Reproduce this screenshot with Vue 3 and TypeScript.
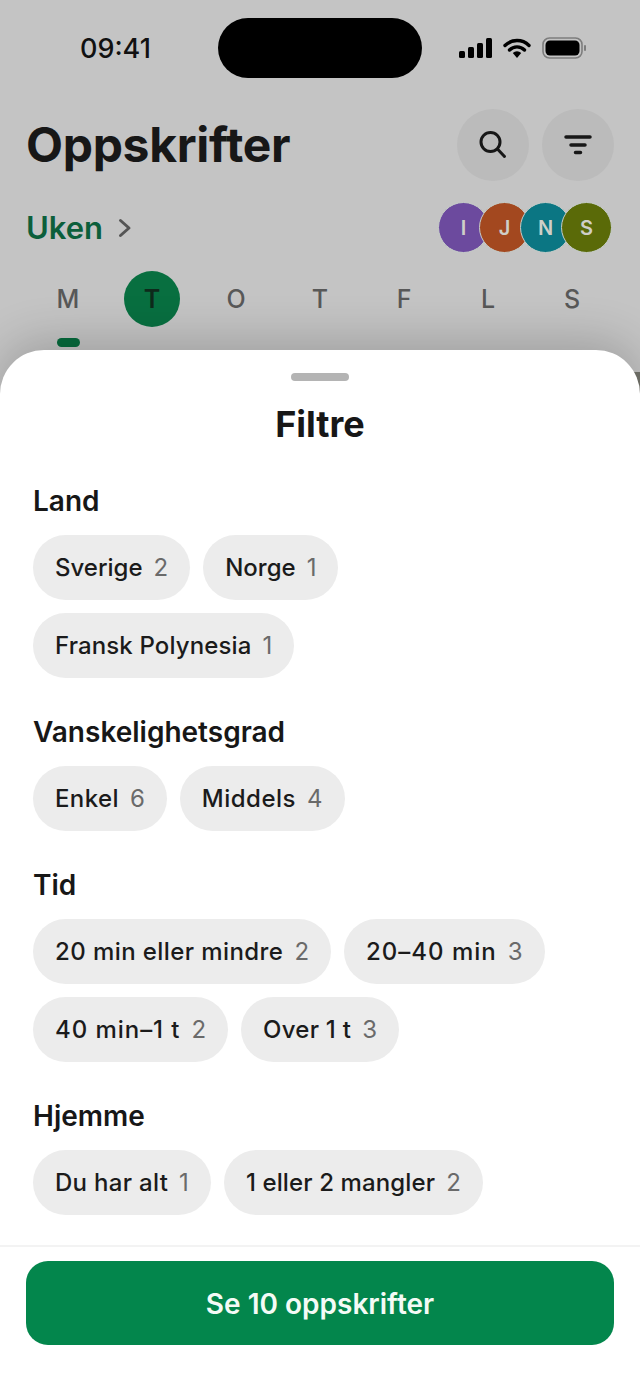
<script setup lang="ts">
interface Chip { label: string; count: number; spread?: number }
interface Group { title: string; chips: Chip[] }
const groups: Group[] = [
  { title: 'Land', chips: [{ label: 'Sverige', count: 2 }, { label: 'Norge', count: 1 }, { label: 'Fransk Polynesia', count: 1, spread: 0.13 }] },
  { title: 'Vanskelighetsgrad', chips: [{ label: 'Enkel', count: 6, spread: 0.4 }, { label: 'Middels', count: 4, spread: 0.5 }] },
  { title: 'Tid', chips: [{ label: '20 min eller mindre', count: 2, spread: 0.42 }, { label: '20–40 min', count: 3, spread: 1 }, { label: '40 min–1 t', count: 2, spread: 0.95 }, { label: 'Over 1 t', count: 3, spread: 0.25 }] },
  { title: 'Hjemme', chips: [{ label: 'Du har alt', count: 1, spread: 0.3 }, { label: '1 eller 2 mangler', count: 2, spread: 0.12 }] },
]
const days = ['M', 'T', 'O', 'T', 'F', 'L', 'S']
const people = [
  { l: 'I', c: '#6c4a9e' }, { l: 'J', c: '#a3481f' }, { l: 'N', c: '#0b7683' }, { l: 'S', c: '#5a6a08' },
]
</script>

<template>
  <div class="screen">
    <div class="status">
      <span class="time">09:41</span>
      <div class="island"></div>
      <div class="status-icons">
        <svg width="33" height="20" viewBox="0 0 33 20"><rect x="0" y="13" width="6" height="7" rx="1.5"/><rect x="9" y="9" width="6" height="11" rx="1.5"/><rect x="18" y="5" width="6" height="15" rx="1.5"/><rect x="27" y="0" width="6" height="20" rx="1.5"/></svg>
        <svg width="28" height="20" viewBox="0 0 28 20"><path d="M2 7.5a17 17 0 0 1 24 0M6.5 12a10.6 10.6 0 0 1 15 0" fill="none" stroke="#000" stroke-width="3.4" stroke-linecap="round"/><path d="M9.8 15a6 6 0 0 1 8.4 0L14 20z"/></svg>
        <svg width="45" height="22" viewBox="0 0 45 22"><rect x="1" y="1" width="39" height="20" rx="6.5" fill="none" stroke="#7d7d7d" stroke-width="1.6"/><rect x="3.5" y="3.5" width="34" height="15" rx="4.5"/><rect x="42" y="8" width="2" height="6" rx="1" fill="#7d7d7d"/></svg>
      </div>
    </div>

    <header class="head">
      <h1>Oppskrifter</h1>
      <div class="actions">
        <button class="round">
          <svg width="32" height="32" viewBox="0 0 32 32" fill="none" stroke="#171717" stroke-width="3" stroke-linecap="round"><circle cx="13.500" cy="13" r="9.500"/><path d="M20.500 20l7 7.500"/></svg>
        </button>
        <button class="round">
          <svg width="32" height="32" viewBox="0 0 32 32" fill="none" stroke="#171717" stroke-width="3.500" stroke-linecap="round"><path d="M4 8h24M9 16h14M13.500 23.500h5"/></svg>
        </button>
      </div>
    </header>

    <div class="week">
      <div class="week-link">
        <span>Uken</span>
        <svg width="14" height="20" viewBox="0 0 14 20" fill="none" stroke="#555" stroke-width="3" stroke-linecap="round" stroke-linejoin="round"><path d="M2.500 2.500L11 10l-8.500 7.500"/></svg>
      </div>
      <div class="people">
        <span v-for="p in people" :key="p.l" class="avatar" :style="{ background: p.c }">{{ p.l }}</span>
      </div>
    </div>

    <div class="days">
      <div v-for="(d, i) in days" :key="i" class="day" :class="{ active: i === 1 }">
        <span class="letter">{{ d }}</span>
        <span v-if="i === 0" class="marker"></span>
      </div>
    </div>

    <div class="peek"></div>

    <section class="sheet">
      <div class="handle"></div>
      <h2>Filtre</h2>
      <div class="groups">
        <div v-for="g in groups" :key="g.title" class="group">
          <h3>{{ g.title }}</h3>
          <div class="chips">
            <div v-for="c in g.chips" :key="c.label" class="chip">
              <span :style="{ letterSpacing: (c.spread ?? 0) + 'px' }">{{ c.label }}</span>
              <span class="count">{{ c.count }}</span>
            </div>
          </div>
        </div>
      </div>
      <footer class="foot">
        <button class="cta">Se 10 oppskrifter</button>
      </footer>
    </section>
  </div>
</template>

<style>
html, body { margin: 0; background: #c4c4c4; }
</style>

<style scoped>
* { box-sizing: border-box; }
.screen {
  position: relative;
  width: 640px;
  height: 1388px;
  overflow: hidden;
  background: #c4c4c4;
  font-family: Inter, "Liberation Sans", sans-serif;
  color: #171717;
}
.status {
  height: 78px;
  padding-top: 18px;
  display: flex;
  align-items: flex-start;
  position: relative;
}
.time {
  position: absolute;
  left: 80px;
  top: 33px;
  font-size: 27px;
  line-height: 32px;
  font-weight: 500;
  color: #111;
}
.island {
  width: 204px;
  height: 60px;
  margin-left: 218px;
  border-radius: 30px;
  background: #000;
}
.status-icons {
  position: absolute;
  left: 459px;
  top: 37px;
  display: flex;
  align-items: center;
  gap: 11px;
}
.head {
  display: flex;
  justify-content: space-between;
  align-items: center;
  padding: 31px 26px 0 26px;
}
h1 {
  margin: 0;
  font-size: 48px;
  line-height: 72px;
  font-weight: 700;
  letter-spacing: -0.3px;
  color: #171717;
}
.actions { display: flex; gap: 13px; }
.round {
  width: 72px;
  height: 72px;
  border: 0;
  padding: 0;
  border-radius: 50%;
  background: #bbbbbb;
  display: flex;
  align-items: center;
  justify-content: center;
}
.week {
  display: flex;
  justify-content: space-between;
  align-items: center;
  padding: 21px 28px 0 26px;
}
.week-link {
  display: flex;
  align-items: center;
  gap: 15px;
  font-size: 31px;
  line-height: 50px;
  font-weight: 600;
  color: #0c5f3b;
}
.people { display: flex; }
.avatar {
  width: 51px;
  height: 51px;
  margin-left: -10px;
  border-radius: 50%;
  border: 1.500px solid #c6cdc9;
  display: flex;
  align-items: center;
  justify-content: center;
  color: #cfcfc8;
  font-size: 20px;
  font-weight: 600;
}
.days {
  display: flex;
  padding: 18px 26px 0 26px;
}
.day {
  position: relative;
  flex: 1;
  height: 56px;
  display: flex;
  justify-content: center;
}
.letter {
  width: 56px;
  height: 56px;
  border-radius: 50%;
  display: flex;
  align-items: center;
  justify-content: center;
  font-size: 25px;
  font-weight: 500;
  color: #585858;
}
.active .letter { background: #086f40; color: #0e2a1b; font-weight: 600; }
.marker {
  position: absolute;
  left: 50%;
  top: 67px;
  width: 23px;
  height: 9px;
  margin-left: -11.500px;
  border-radius: 5px;
  background: #066b3d;
}
.peek {
  position: absolute;
  right: 0;
  top: 372px;
  width: 20px;
  height: 40px;
  background: #74746c;
}
.sheet {
  position: absolute;
  left: 0;
  right: 0;
  bottom: 0;
  height: 1038px;
  background: #fff;
  border-radius: 44px 44px 0 0;
  box-shadow: 0 -8px 48px rgba(0, 0, 0, 0.2);
  display: flex;
  flex-direction: column;
}
.handle {
  width: 58px;
  height: 8px;
  margin: 23px auto 0;
  border-radius: 4px;
  background: #b4b4b4;
}
h2 {
  margin: 22px 0 0;
  text-align: center;
  font-size: 36px;
  line-height: 42px;
  font-weight: 700;
  color: #171717;
}
.groups {
  flex: 1;
  padding: 39px 32px 0 33px;
  display: flex;
  flex-direction: column;
  gap: 37px;
}
h3 {
  margin: 0 0 17px;
  font-size: 28px;
  line-height: 34px;
  font-weight: 600;
  color: #171717;
}
.chips { display: flex; flex-wrap: wrap; gap: 13px; }
.chip {
  height: 65px;
  padding: 0 22px;
  border-radius: 33px;
  background: #ececec;
  display: flex;
  align-items: center;
  gap: 11px;
  font-size: 24px;
  font-weight: 500;
  color: #1b1b1b;
}
.count { color: #6a6a6a; font-weight: 400; }
.foot {
  height: 143px;
  padding: 14px 26px 0;
  border-top: 2px solid #f3f3f3;
}
.cta {
  width: 100%;
  height: 84px;
  padding: 2px 0 0;
  border: 0;
  border-radius: 22px;
  background: #03864c;
  color: #f4fbf6;
  font-family: inherit;
  font-size: 28px;
  font-weight: 600;
}
</style>
